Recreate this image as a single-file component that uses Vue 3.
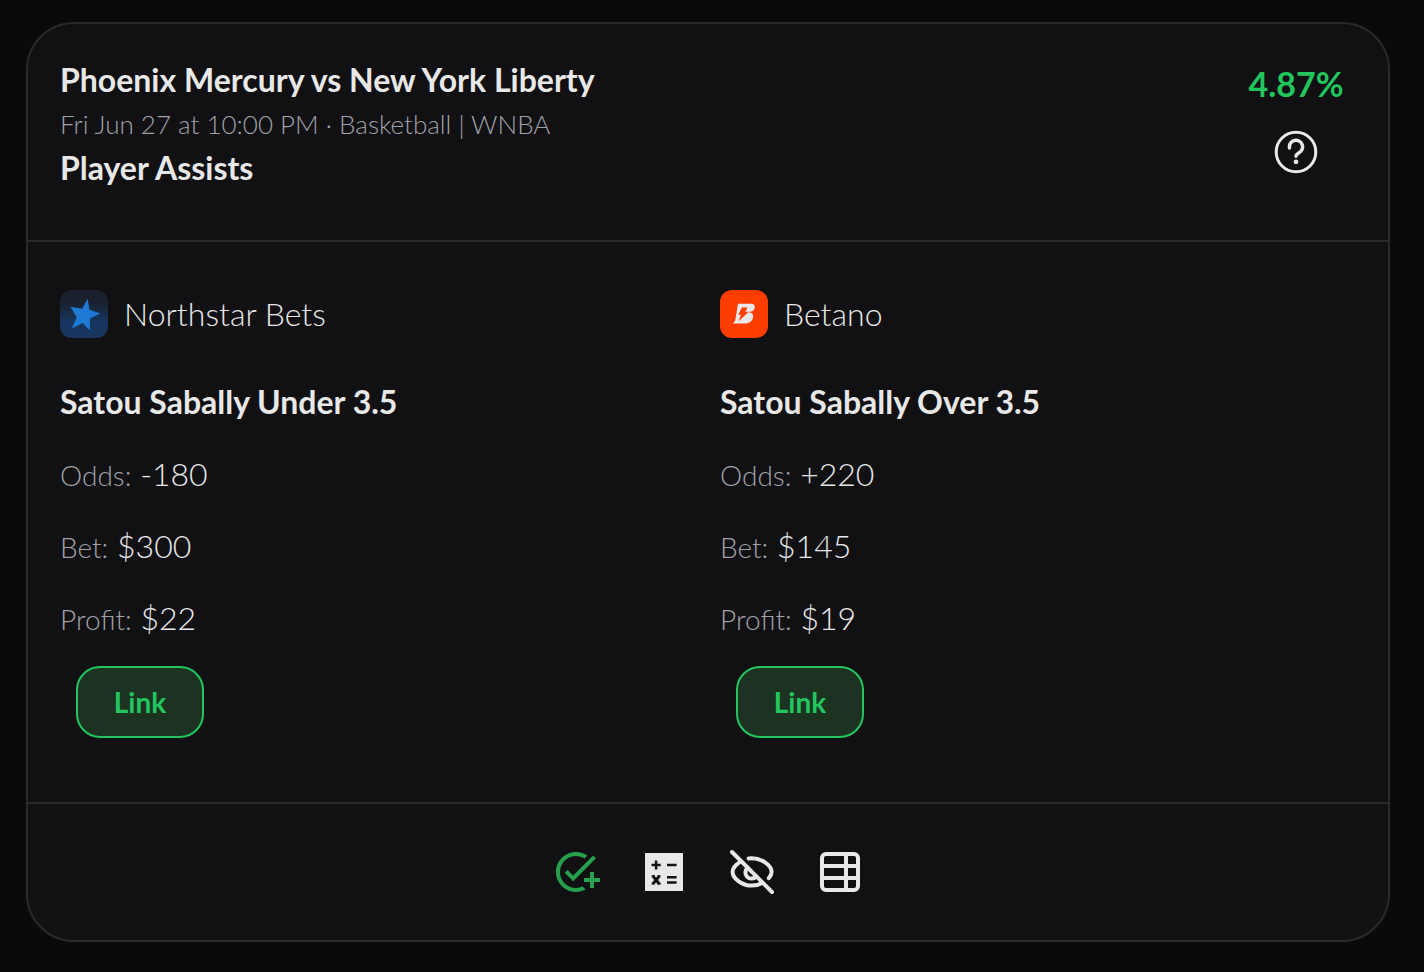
<template>
  <main class="page">
    <article class="bet-card">
      <header class="card-header">
        <div class="event">
          <h1>{{ event.title }}</h1>
          <p class="event-meta">{{ event.time }} · {{ event.sport }} | {{ event.league }}</p>
          <h2>{{ event.market }}</h2>
        </div>
        <div class="summary">
          <strong class="percent">{{ event.percent }}</strong>
          <button type="button" class="icon-button" aria-label="Help">
            <svg viewBox="0 0 24 24" fill="none" stroke="currentColor" stroke-width="1.5" stroke-linecap="round">
              <circle cx="12" cy="12" r="9.900" />
              <path d="M8.700 10V9.500a3.300 3.300 0 1 1 5.700 2.200c-.9.9-2.400 1.300-2.400 2.400" stroke-width="1.700" />
              <circle cx="12" cy="16.900" r="1.200" fill="currentColor" stroke="none" />
            </svg>
          </button>
        </div>
      </header>

      <div class="sides">
        <section v-for="side in sides" :key="side.id" class="side">
          <div class="book">
            <svg v-if="side.id === 'northstar'" class="book-logo" viewBox="0 0 48 48">
              <defs>
                <linearGradient id="night" x1="0" y1="0" x2="0" y2="1">
                  <stop offset="0.25" stop-color="#1a202e" />
                  <stop offset="0.65" stop-color="#17355f" />
                </linearGradient>
              </defs>
              <rect width="48" height="48" rx="12" fill="url(#night)" />
              <path d="M27.700 8.700 29.400 19.800 40.300 23.400 30 28.600 29.700 40.200 22.600 33 11.800 38.600 16.800 27.600 10.600 16.800 22.200 18.700Z" fill="#1f7ad6" />
            </svg>
            <svg v-else class="book-logo" viewBox="0 0 48 48">
              <rect width="48" height="48" rx="12" fill="#ff3d00" />
              <path d="M18 13.700h13c3 0 4.300 1.600 3.600 4.400-.5 2.200-1.600 3.700-3.500 4.800 1.800 1 2.400 2.600 1.900 4.700-.8 3.800-3.700 6-8 6H13l2.200-3.200Z" fill="#e8e8e8" />
              <path d="M21.800 17.500h5.600l-2 4.300h3.400L18.600 31.200l2.300-6.400h-2.600Z" fill="#ff3d00" />
              <path d="M28.500 22.200 35 20.300l-3 2.600Z" fill="#ff3d00" />
            </svg>
            <span>{{ side.book }}</span>
          </div>
          <h3>{{ side.pick }}</h3>
          <p class="stat"><span>Odds:</span> {{ side.odds }}</p>
          <p class="stat"><span>Bet:</span> {{ side.bet }}</p>
          <p class="stat"><span>Profit:</span> {{ side.profit }}</p>
          <a class="bet-link" href="#">Link</a>
        </section>
      </div>

      <footer class="card-footer">
        <button type="button" class="icon-button track" aria-label="Track bet">
          <svg viewBox="0 0 24 24" fill="currentColor">
            <path d="M22 5.180 10.590 16.600l-4.240-4.240 1.410-1.410 2.830 2.830 10-10L22 5.180zM12 20c-4.420 0-8-3.580-8-8s3.580-8 8-8c1.570 0 3.040.46 4.280 1.250l1.450-1.450C16.100 2.670 14.130 2 12 2 6.480 2 2 6.480 2 12s4.480 10 10 10c1.730 0 3.360-.44 4.780-1.220l-1.500-1.500c-1 .46-2.110.72-3.280.72zm7-5h-3v2h3v3h2v-3h3v-2h-3v-3h-2v3z" />
          </svg>
        </button>
        <button type="button" class="icon-button" aria-label="Calculator">
          <svg viewBox="0 0 48 48">
            <rect x="5" y="5" width="38" height="38" rx="1" fill="currentColor" />
            <g fill="none" stroke="#111113" stroke-width="2.500">
              <path d="M11.500 17h9.200M16.100 12.400v9.200M27 17h9.600M27 29.300h9.600M27 34.500h9.600" />
              <path d="M12.800 28l6.600 8M19.400 28l-6.600 8" stroke-width="2.800" />
              <path d="M11.600 28h3.400M17.500 28h3M11.600 35.800h3M17.200 35.800h3.600" stroke-width="1.600" />
            </g>
          </svg>
        </button>
        <button type="button" class="icon-button" aria-label="Hide bet">
          <svg viewBox="0 0 24 24" fill="none" stroke="currentColor" stroke-width="2" stroke-linecap="round">
            <path d="M2 2l20 20" />
            <path d="M6.500 6.700C4 8.200 2.300 10.300 2.300 12c0 3 4.400 6.800 9.700 6.800 2 0 3.800-.5 5.300-1.400" />
            <path d="M10.300 5.200C16.400 4.400 21.800 8.700 21.800 12c0 1-.5 2.100-1.400 3.100" />
            <path d="M9.900 9.900a3 3 0 1 0 4.200 4.200" />
          </svg>
        </button>
        <button type="button" class="icon-button" aria-label="Odds table">
          <svg viewBox="0 0 24 24" fill="none" stroke="currentColor" stroke-width="2">
            <rect x="3" y="3" width="18" height="18" rx="2" />
            <path d="M3 9h18M3 15h18M15 3v18" />
          </svg>
        </button>
      </footer>
    </article>
  </main>
</template>

<script setup>
import { ref } from 'vue'

const event = ref({
  title: 'Phoenix Mercury vs New York Liberty',
  time: 'Fri Jun 27 at 10:00 PM',
  sport: 'Basketball',
  league: 'WNBA',
  market: 'Player Assists',
  percent: '4.87%'
})

// the two sides of the arbitrage
const sides = ref([
  { id: 'northstar', book: 'Northstar Bets', pick: 'Satou Sabally Under 3.5', odds: '-180', bet: '$300', profit: '$22' },
  { id: 'betano', book: 'Betano', pick: 'Satou Sabally Over 3.5', odds: '+220', bet: '$145', profit: '$19' }
])
</script>

<style>
body {
  margin: 0;
  background: #0a0a08;
}
</style>

<style scoped>
* {
  box-sizing: border-box;
}

.page {
  padding: 22px 34px 30px 26px;
  font-family: Lato, "Liberation Sans", sans-serif;
  font-size: 32px;
  font-weight: 300;
  line-height: 48px;
  color: #e8e8e8;
}

.bet-card {
  background: #111113;
  border: 2px solid #2a2a2d;
  border-radius: 48px;
}

.card-header {
  display: flex;
  justify-content: space-between;
  padding: 32px 32px 48px;
  border-bottom: 2px solid #2a2a2d;
}

h1,
h2,
h3,
p {
  margin: 0;
  font-size: 32px;
}

h1,
h2,
h3 {
  font-weight: 700;
}

.card-header .event-meta {
  font-size: 26px;
  line-height: 40px;
  color: #a1a1aa;
}

.summary {
  display: flex;
  flex-direction: column;
  align-items: center;
  gap: 16px;
  width: 120px;
}

.percent {
  font-size: 34px;
  font-weight: 700;
  line-height: 56px;
  color: #22c55e;
}

.icon-button {
  width: 48px;
  height: 48px;
  padding: 0;
  border: none;
  background: none;
  color: #e8e8e8;
  cursor: pointer;
}

.icon-button svg {
  display: block;
  width: 100%;
  height: 100%;
}

.icon-button.track {
  color: #26a04c;
}

.sides {
  display: grid;
  grid-template-columns: 1fr 1fr;
  gap: 24px;
  padding: 48px 32px 64px;
}

.side {
  display: flex;
  flex-direction: column;
  align-items: flex-start;
  gap: 24px;
}

.book {
  display: flex;
  align-items: center;
  gap: 16px;
  margin-bottom: 16px;
}

.book-logo {
  width: 48px;
  height: 48px;
}

.stat span {
  font-size: 28px;
  line-height: 40px;
  color: #a1a1aa;
}

.bet-link {
  width: 128px;
  margin-left: 16px;
  padding: 10px 0;
  border: 2px solid #22c55e;
  border-radius: 24px;
  background: #1c3322;
  color: #22c55e;
  font-size: 28px;
  font-weight: 700;
  text-align: center;
  text-decoration: none;
}

.card-footer {
  display: flex;
  justify-content: center;
  gap: 40px;
  padding: 44px 32px;
  border-top: 2px solid #2a2a2d;
}
</style>
